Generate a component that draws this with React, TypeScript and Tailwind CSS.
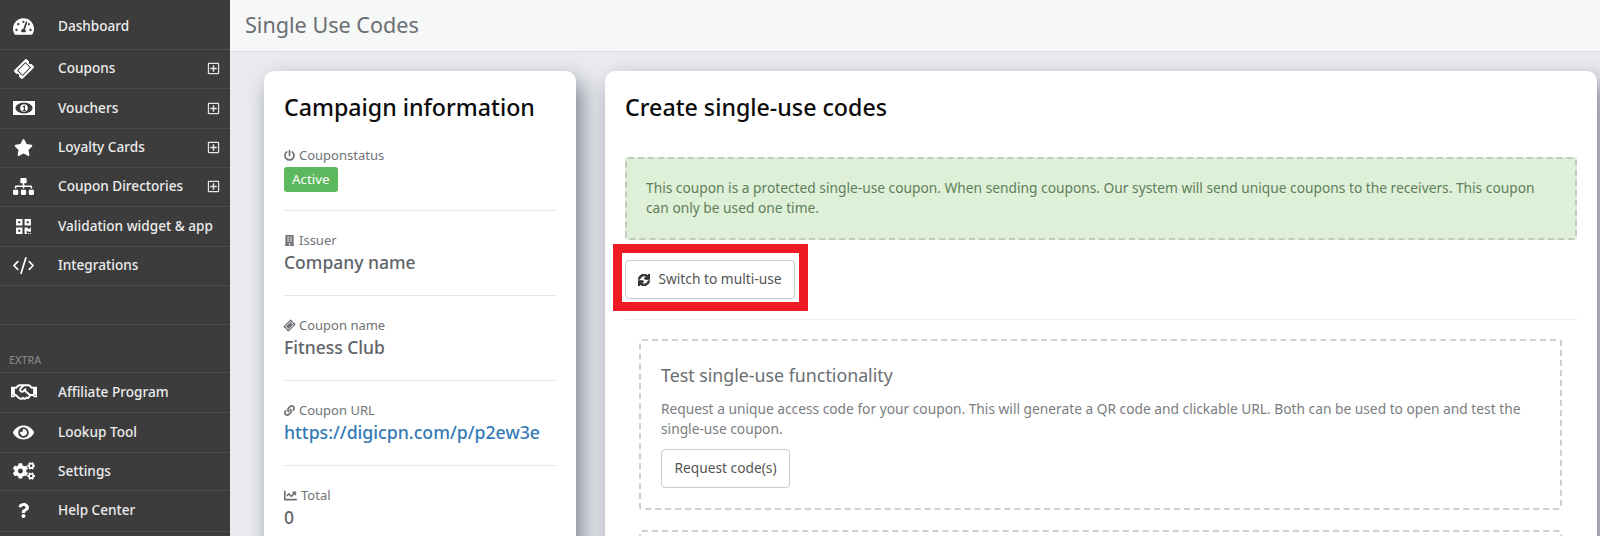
import React from "react";
import {
  FaTachometerAlt, FaTicketAlt, FaStar, FaSitemap, FaQrcode,
  FaRegHandshake, FaEye, FaCogs, FaQuestion, FaRegPlusSquare, FaPowerOff, FaBuilding,
  FaLink, FaChartLine, FaSync,
} from "react-icons/fa";
import { CodeXml } from "lucide-react";

type Item = { icon: React.ReactNode; label: string; plus?: boolean; h: string };

function Bill() {
  return (
    <svg width="22" height="14" viewBox="0 0 22 14" aria-hidden="true">
      <rect width="22" height="14" fill="#fff" />
      <ellipse cx="11" cy="7" rx="8.6" ry="5.4" fill="#3c3c3c" />
      <circle cx="11" cy="7" r="3.8" fill="#fff" />
      <path d="M9.6 5.4l1.5-1h.9v4.6h1v1h-3.2V9h1V5.8l-1.2.6z" fill="#3c3c3c" />
    </svg>
  );
}

const top: Item[] = [
  { icon: <FaTachometerAlt size={21} />, label: "Dashboard", h: "h-[50px] pt-[3px]" },
  { icon: <FaTicketAlt size={18} className="-rotate-45" />, label: "Coupons", plus: true, h: "h-[39px] pb-[1px]" },
  { icon: <Bill />, label: "Vouchers", plus: true, h: "h-[40px] pb-[1px]" },
  { icon: <FaStar size={19} />, label: "Loyalty Cards", plus: true, h: "h-[39px] pb-[1px]" },
  { icon: <FaSitemap size={21} />, label: "Coupon Directories", plus: true, h: "h-[39px] pb-[1px]" },
  { icon: <FaQrcode size={17} />, label: "Validation widget & app", h: "h-[40px] pb-[1px]" },
  { icon: <CodeXml size={23} strokeWidth={1.8} />, label: "Integrations", h: "h-[39px] pb-[1px]" },
];
const extra: Item[] = [
  { icon: <FaRegHandshake size={26} />, label: "Affiliate Program", h: "h-[40px] pb-[1px]" },
  { icon: <FaEye size={21} />, label: "Lookup Tool", h: "h-[40px] pb-[1px]" },
  { icon: <FaCogs size={22} />, label: "Settings", h: "h-[38px] pb-[1px]" },
  { icon: <FaQuestion size={15} />, label: "Help Center", h: "h-[41px] pb-[1px]" },
];

function NavRow({ item }: { item: Item }) {
  return (
    <div className={`${item.h} shrink-0 flex items-center border-b border-[#4c4c4c] text-[13.6px] font-medium text-[#ececec]`}>
      <span className="w-[47px] flex justify-center text-white">{item.icon}</span>
      <span className="ml-[11px] flex-1 whitespace-nowrap">{item.label}</span>
      {item.plus && <FaRegPlusSquare size={13} className="mr-[10px] text-[#e8e8e8]" />}
    </div>
  );
}

function Info({ icon, label, children, last }: { icon: React.ReactNode; label: string; children: React.ReactNode; last?: boolean }) {
  return (
    <div className={`${last ? "" : "border-b border-[#e8e9eb]"} h-[85px] shrink-0 pt-[21px]`}>
      <div className="flex items-center gap-[4px] text-[13px] leading-[17px] text-[#6f7378]">
        {icon}
        <span>{label}</span>
      </div>
      {children}
    </div>
  );
}

const Value = ({ children }: { children: React.ReactNode }) => (
  <div className="text-[17.5px] leading-[26px] font-medium text-[#5f6368]">{children}</div>
);

export default function App() {
  return (
    <div className="h-[536px] w-[1600px] overflow-hidden flex bg-[#e9ebf0] [font-family:'Noto_Sans',sans-serif]">
      <aside className="w-[230px] shrink-0 bg-[#3c3c3c] flex flex-col">
        {top.map((i) => <NavRow key={i.label} item={i} />)}
        <div className="h-[39px] shrink-0 border-b border-[#4c4c4c]" />
        <div className="h-[48px] shrink-0 border-b border-[#4c4c4c] flex items-end pb-[4px] pl-[9px] text-[10.7px] font-medium leading-[15px] text-[#7f8589]">EXTRA</div>
        {extra.map((i) => <NavRow key={i.label} item={i} />)}
      </aside>

      <div className="flex-1 min-w-0 flex flex-col">
        <header className="h-[52px] shrink-0 bg-[#f6f7f7] border-b border-[#dcdee2] flex items-center pl-[15px] text-[21.6px] text-[#6a6e72]">
          Single Use Codes
        </header>
        <main className="flex-1 min-h-0 flex items-start gap-[29px] pl-[34px] pr-[3px] pt-[19px]">
          <section className="w-[312px] h-[560px] shrink-0 bg-white rounded-[10px] shadow-[6px_10px_22px_rgba(40,44,60,0.55)] px-[20px] pt-[20px] flex flex-col">
            <h2 className="text-[23.2px] leading-[33px] font-medium text-[#0b0b0b]">Campaign information</h2>
            <div className="h-[87px] shrink-0 border-b border-[#e8e9eb] pt-[23px]">
              <div className="flex items-center gap-[4px] text-[13px] leading-[17px] text-[#6f7378]">
                <FaPowerOff size={11} />
                <span>Couponstatus</span>
              </div>
              <span className="mt-[3px] inline-block rounded-[3px] bg-[#5cb85c] px-[8px] text-[13.4px] leading-[25px] text-white">Active</span>
            </div>
            <Info icon={<FaBuilding size={11} />} label="Issuer"><Value>Company name</Value></Info>
            <Info icon={<FaTicketAlt size={11} className="-rotate-45" />} label="Coupon name"><Value>Fitness Club</Value></Info>
            <Info icon={<FaLink size={11} />} label="Coupon URL">
              <div className="text-[17.7px] leading-[26px] font-medium text-[#337ab7]">https://digicpn.com/p/p2ew3e</div>
            </Info>
            <Info last icon={<FaChartLine size={13} />} label="Total"><Value>0</Value></Info>
          </section>

          <section className="flex-1 min-w-0 h-[560px] bg-white rounded-[10px] shadow-[6px_10px_22px_rgba(40,44,60,0.55)] px-[20px] pt-[20px]">
            <h2 className="text-[23.2px] leading-[33px] font-medium text-[#0b0b0b]">Create single-use codes</h2>
            <div className="mt-[33px] h-[83px] rounded-[3px] border-2 border-dashed border-[#c3cabf] bg-[#dff0d8] px-[19px] pt-[19px] text-[13.75px] leading-[20px] text-[#5d7f5b]">
              This coupon is a protected single-use coupon. When sending coupons. Our system will send unique coupons to the receivers. This coupon can only be used one time.
            </div>
            <div className="mt-[20px] relative w-fit">
              <button className="h-[39px] w-[170px] flex items-center justify-center gap-[8px] rounded-[4px] border border-[#cccccc] bg-white text-[13.75px] text-[#555]">
                <FaSync size={12} stroke="currentColor" strokeWidth={40} className="text-[#333]" />
                <span>Switch to multi-use</span>
              </button>
              <div className="absolute -left-[12px] -right-[13px] -top-[16px] -bottom-[12px] border-[9px] border-[#ed1c24] pointer-events-none" />
            </div>
            <div className="mt-[20px] border-t border-[#eeeeee]" />
            <div className="mt-[19px] ml-[14px] mr-[15px] h-[171px] rounded-[3px] border-2 border-dashed border-[#d0d0d0] px-[20px] pt-[21px]">
              <h3 className="text-[17.8px] leading-[26px] text-[#6a6e72]">Test single-use functionality</h3>
              <p className="mt-[11px] text-[13.75px] leading-[20px] text-[#7a7d80]">
                Request a unique access code for your coupon. This will generate a QR code and clickable URL. Both can be used to open and test the single-use coupon.
              </p>
              <button className="mt-[10px] h-[39px] w-[129px] rounded-[4px] border border-[#cccccc] bg-white text-[13.75px] text-[#555]">Request code(s)</button>
            </div>
            <div className="mt-[20px] ml-[14px] mr-[15px] h-[100px] rounded-[3px] border-2 border-dashed border-[#d0d0d0]" />
          </section>
        </main>
      </div>
    </div>
  );
}
